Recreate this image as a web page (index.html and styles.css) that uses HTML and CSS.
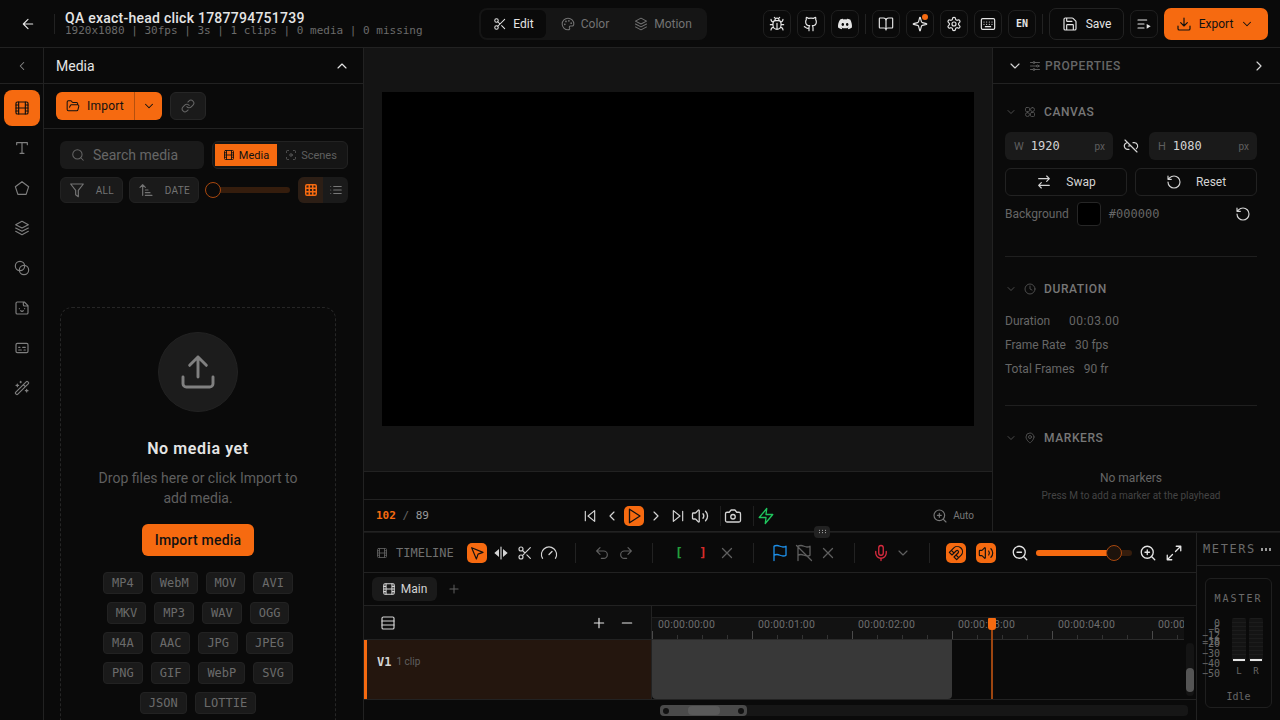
FILE: index.html
```html
<!DOCTYPE html>
<html lang="en">
<head>
    <meta charset="UTF-8">
    <title>QA exact-head click - Editor</title>
    <link rel="stylesheet" href="styles.css">
</head>
<body>

    <!-- Icons -->
    <svg class="sprite" xmlns="http://www.w3.org/2000/svg">
        <symbol id="i-back" viewBox="0 0 24 24"><path d="M19 12H5M12 19l-7-7 7-7"/></symbol>
        <symbol id="i-scissors" viewBox="0 0 24 24"><circle cx="6" cy="6" r="3"/><circle cx="6" cy="18" r="3"/><path d="M8.12 8.12 12 12M20 4 8.12 15.88M14.8 14.8 20 20"/></symbol>
        <symbol id="i-palette" viewBox="0 0 24 24"><path d="M12 22a10 10 0 1 1 10-10c0 2.2-1.6 3.5-3.5 3.5h-2.3a2 2 0 0 0-1.5 3.3c.9 1.1.2 3.2-2.7 3.2z"/><circle cx="13.5" cy="6.5" r=".6"/><circle cx="17.5" cy="10.5" r=".6"/><circle cx="6.5" cy="12.5" r=".6"/><circle cx="8.5" cy="7.5" r=".6"/></symbol>
        <symbol id="i-layers" viewBox="0 0 24 24"><path d="m12 2 9.5 5-9.5 5-9.5-5zM2.5 12l9.5 5 9.5-5M2.5 17l9.5 5 9.5-5"/></symbol>
        <symbol id="i-bug" viewBox="0 0 24 24"><path d="m8 2 1.88 1.88M14.12 3.88 16 2M9 7.13v-1a3 3 0 1 1 6 0v1M12 20c-3.3 0-6-2.7-6-6v-3a4 4 0 0 1 4-4h4a4 4 0 0 1 4 4v3c0 3.3-2.7 6-6 6M12 20v-9M6.53 9C4.6 8.8 3 7.1 3 5M6 13H2M3 21c0-2.1 1.7-3.9 3.8-4M20.97 5c0 2.1-1.6 3.8-3.5 4M22 13h-4M17.2 17c2.1.1 3.8 1.9 3.8 4"/></symbol>
        <symbol id="i-github" viewBox="0 0 24 24"><path d="M15 22v-4a4.8 4.8 0 0 0-1-3.5c3 0 6-2 6-5.5.08-1.25-.27-2.48-1-3.5.28-1.15.28-2.35 0-3.5 0 0-1 0-3 1.5-2.64-.5-5.36-.5-8 0C6 2 5 2 5 2c-.3 1.15-.3 2.35 0 3.5A5.4 5.4 0 0 0 4 9c0 3.5 3 5.5 6 5.5-.39.49-.68 1.05-.85 1.65-.17.6-.22 1.23-.15 1.85v4M9 18c-4.51 2-5-2-7-2"/></symbol>
        <symbol id="i-discord" viewBox="0 0 24 24"><path class="solid" d="M19.3 5.3A17 17 0 0 0 15 4l-.6 1.2a16 16 0 0 0-4.8 0L9 4a17 17 0 0 0-4.3 1.3C2 9.4 1.2 13.4 1.6 17.3A17 17 0 0 0 6.9 20l1.1-1.8-1.7-.8.4-.3a12 12 0 0 0 10.6 0l.4.3-1.7.8 1.1 1.8a17 17 0 0 0 5.3-2.7c.5-4.5-.8-8.5-2.6-12zM8.7 14.9c-1 0-1.9-1-1.9-2.2s.8-2.2 1.9-2.2 1.9 1 1.9 2.2-.8 2.2-1.9 2.2zm6.6 0c-1 0-1.9-1-1.9-2.2s.8-2.2 1.9-2.2 1.9 1 1.9 2.2-.9 2.2-1.9 2.2z"/></symbol>
        <symbol id="i-book" viewBox="0 0 24 24"><path d="M12 7v14M3 18a1 1 0 0 1-1-1V4a1 1 0 0 1 1-1h5a4 4 0 0 1 4 4 4 4 0 0 1 4-4h5a1 1 0 0 1 1 1v13a1 1 0 0 1-1 1h-6a3 3 0 0 0-3 3 3 3 0 0 0-3-3z"/></symbol>
        <symbol id="i-sparkle" viewBox="0 0 24 24"><path d="M9.9 15.5a2 2 0 0 0-1.4-1.4l-6.1-1.6a.5.5 0 0 1 0-1l6.1-1.6a2 2 0 0 0 1.4-1.4l1.6-6.1a.5.5 0 0 1 1 0l1.6 6.1a2 2 0 0 0 1.4 1.4l6.1 1.6a.5.5 0 0 1 0 1l-6.1 1.6a2 2 0 0 0-1.4 1.4l-1.6 6.1a.5.5 0 0 1-1 0z"/></symbol>
        <symbol id="i-gear" viewBox="0 0 24 24"><path d="M12.22 2h-.44a2 2 0 0 0-2 2v.18a2 2 0 0 1-1 1.73l-.43.25a2 2 0 0 1-2 0l-.15-.08a2 2 0 0 0-2.73.73l-.22.38a2 2 0 0 0 .73 2.73l.15.1a2 2 0 0 1 1 1.72v.51a2 2 0 0 1-1 1.74l-.15.09a2 2 0 0 0-.73 2.73l.22.38a2 2 0 0 0 2.73.73l.15-.08a2 2 0 0 1 2 0l.43.25a2 2 0 0 1 1 1.73V20a2 2 0 0 0 2 2h.44a2 2 0 0 0 2-2v-.18a2 2 0 0 1 1-1.73l.43-.25a2 2 0 0 1 2 0l.15.08a2 2 0 0 0 2.73-.73l.22-.39a2 2 0 0 0-.73-2.73l-.15-.08a2 2 0 0 1-1-1.74v-.5a2 2 0 0 1 1-1.74l.15-.09a2 2 0 0 0 .73-2.73l-.22-.38a2 2 0 0 0-2.73-.73l-.15.08a2 2 0 0 1-2 0l-.43-.25a2 2 0 0 1-1-1.73V4a2 2 0 0 0-2-2z"/><circle cx="12" cy="12" r="3"/></symbol>
        <symbol id="i-keyboard" viewBox="0 0 24 24"><rect x="2" y="4" width="20" height="16" rx="2"/><path d="M6 9h.01M10 9h.01M14 9h.01M18 9h.01M6 12.5h.01M10 12.5h.01M14 12.5h.01M18 12.5h.01M8 16h8"/></symbol>
        <symbol id="i-save" viewBox="0 0 24 24"><path d="M15.2 3a2 2 0 0 1 1.4.6l3.8 3.8a2 2 0 0 1 .6 1.4V19a2 2 0 0 1-2 2H5a2 2 0 0 1-2-2V5a2 2 0 0 1 2-2zM17 21v-7a1 1 0 0 0-1-1H8a1 1 0 0 0-1 1v7M7 3v4a1 1 0 0 0 1 1h7"/></symbol>
        <symbol id="i-queue" viewBox="0 0 24 24"><path d="M12 12H3M16 6H3M12 18H3"/><path class="solid" d="m16 12 6 3.500-6 3.500z"/></symbol>
        <symbol id="i-download" viewBox="0 0 24 24"><path d="M21 15v4a2 2 0 0 1-2 2H5a2 2 0 0 1-2-2v-4M7 10l5 5 5-5M12 15V3"/></symbol>
        <symbol id="i-down" viewBox="0 0 24 24"><path d="m6 9 6 6 6-6"/></symbol>
        <symbol id="i-up" viewBox="0 0 24 24"><path d="m18 15-6-6-6 6"/></symbol>
        <symbol id="i-left" viewBox="0 0 24 24"><path d="m15 18-6-6 6-6"/></symbol>
        <symbol id="i-right" viewBox="0 0 24 24"><path d="m9 18 6-6-6-6"/></symbol>
        <symbol id="i-film" viewBox="0 0 24 24"><rect x="3" y="3" width="18" height="18" rx="2"/><path d="M7 3v18M17 3v18M3 7.5h4M3 12h18M3 16.5h4M17 7.5h4M17 16.5h4"/></symbol>
        <symbol id="i-type" viewBox="0 0 24 24"><path d="M4 7V4h16v3M9 20h6M12 4v16"/></symbol>
        <symbol id="i-pentagon" viewBox="0 0 24 24"><path d="M12 2.5 22 10l-3.800 11.500H5.800L2 10z"/></symbol>
        <symbol id="i-blend" viewBox="0 0 24 24"><circle cx="9" cy="9" r="7"/><circle cx="15" cy="15" r="7"/></symbol>
        <symbol id="i-sticker" viewBox="0 0 24 24"><path d="M15.500 3H5a2 2 0 0 0-2 2v14c0 1.100.9 2 2 2h14a2 2 0 0 0 2-2V8.500zM14 3v4a2 2 0 0 0 2 2h4M8 13h.01M16 13h.01M10 16s.8 1 2 1c1.300 0 2-1 2-1"/></symbol>
        <symbol id="i-captions" viewBox="0 0 24 24"><rect x="3" y="5" width="18" height="14" rx="2"/><path d="M7 15h4M15 15h2M7 11h2M13 11h4"/></symbol>
        <symbol id="i-wand" viewBox="0 0 24 24"><path d="m21.640 3.640-1.280-1.280a1.210 1.210 0 0 0-1.720 0L2.360 18.640a1.210 1.210 0 0 0 0 1.720l1.280 1.280a1.200 1.200 0 0 0 1.720 0L21.640 5.360a1.200 1.200 0 0 0 0-1.720M14 7l3 3M5 6v4M19 14v4M10 2v2M7 8H3M21 16h-4M11 3H9"/></symbol>
        <symbol id="i-folder" viewBox="0 0 24 24"><path d="m6 14 1.500-2.900A2 2 0 0 1 9.240 10H20a2 2 0 0 1 1.940 2.500l-1.540 6a2 2 0 0 1-1.950 1.500H4a2 2 0 0 1-2-2V5a2 2 0 0 1 2-2h3.900a2 2 0 0 1 1.690.9l.81 1.200a2 2 0 0 0 1.670.9H18a2 2 0 0 1 2 2v2"/></symbol>
        <symbol id="i-link" viewBox="0 0 24 24"><path d="M10 13a5 5 0 0 0 7.540.54l3-3a5 5 0 0 0-7.070-7.070l-1.720 1.710M14 11a5 5 0 0 0-7.540-.54l-3 3a5 5 0 0 0 7.070 7.070l1.710-1.710"/></symbol>
        <symbol id="i-unlink" viewBox="0 0 24 24"><path d="M9 17H7A5 5 0 0 1 5 7.400M15 7h2a5 5 0 0 1 3 9M8 12h2M3 3l18 18"/></symbol>
        <symbol id="i-search" viewBox="0 0 24 24"><circle cx="11" cy="11" r="8"/><path d="m21 21-4.300-4.300"/></symbol>
        <symbol id="i-scan" viewBox="0 0 24 24"><path d="M3 7V5a2 2 0 0 1 2-2h2M17 3h2a2 2 0 0 1 2 2v2M21 17v2a2 2 0 0 1-2 2h-2M7 21H5a2 2 0 0 1-2-2v-2"/><circle cx="12" cy="12" r="2.500"/></symbol>
        <symbol id="i-funnel" viewBox="0 0 24 24"><path d="M2.500 3h19L14 12.500V22l-4-3v-6.500z"/></symbol>
        <symbol id="i-sort" viewBox="0 0 24 24"><path d="m3 8 4-4 4 4M7 4v16M11 12h4M11 16h7M11 20h10"/></symbol>
        <symbol id="i-grid" viewBox="0 0 24 24"><rect x="3" y="3" width="18" height="18" rx="2"/><path d="M3 9h18M3 15h18M9 3v18M15 3v18"/></symbol>
        <symbol id="i-list" viewBox="0 0 24 24"><path d="M8 6h13M8 12h13M8 18h13M3 6h.01M3 12h.01M3 18h.01"/></symbol>
        <symbol id="i-upload" viewBox="0 0 24 24"><path d="M21 15v4a2 2 0 0 1-2 2H5a2 2 0 0 1-2-2v-4M17 8l-5-5-5 5M12 3v12"/></symbol>
        <symbol id="i-skip-back" viewBox="0 0 24 24"><path d="M19 20 9 12l10-8zM5 19V5"/></symbol>
        <symbol id="i-skip-next" viewBox="0 0 24 24"><path d="m5 4 10 8-10 8zM19 5v14"/></symbol>
        <symbol id="i-play" viewBox="0 0 24 24"><path d="m6 3 14 9-14 9z"/></symbol>
        <symbol id="i-volume" viewBox="0 0 24 24"><path d="M11 4.700a.7.7 0 0 0-1.200-.5L6.400 7.600A1.400 1.400 0 0 1 5.400 8H3a1 1 0 0 0-1 1v6a1 1 0 0 0 1 1h2.400a1.400 1.400 0 0 1 1 .4l3.400 3.400a.7.7 0 0 0 1.200-.5zM16 9a5 5 0 0 1 0 6M19.400 18.400a9 9 0 0 0 0-12.800"/></symbol>
        <symbol id="i-camera" viewBox="0 0 24 24"><path d="M14.500 4h-5L7 7H4a2 2 0 0 0-2 2v9a2 2 0 0 0 2 2h16a2 2 0 0 0 2-2V9a2 2 0 0 0-2-2h-3z"/><circle cx="12" cy="13" r="3"/></symbol>
        <symbol id="i-zap" viewBox="0 0 24 24"><path d="M13 2 3 14h9l-1 8 10-12h-9z"/></symbol>
        <symbol id="i-zoom-in" viewBox="0 0 24 24"><circle cx="11" cy="11" r="8"/><path d="m21 21-4.300-4.300M11 8v6M8 11h6"/></symbol>
        <symbol id="i-zoom-out" viewBox="0 0 24 24"><circle cx="11" cy="11" r="8"/><path d="m21 21-4.300-4.300M8 11h6"/></symbol>
        <symbol id="i-pointer" viewBox="0 0 24 24"><path d="m4 4 7.070 17 2.510-7.390L21 11.070z"/></symbol>
        <symbol id="i-split" viewBox="0 0 24 24"><path d="M12 3v18"/><path class="solid" d="M9 6v12l-7-6zM15 6v12l7-6z"/></symbol>
        <symbol id="i-gauge" viewBox="0 0 24 24"><path d="m12 14 4-4M3.340 19a10 10 0 1 1 17.320 0"/></symbol>
        <symbol id="i-undo" viewBox="0 0 24 24"><path d="M9 14 4 9l5-5M4 9h10.500a5.500 5.500 0 0 1 0 11H11"/></symbol>
        <symbol id="i-redo" viewBox="0 0 24 24"><path d="m15 14 5-5-5-5M20 9H9.500a5.500 5.500 0 0 0 0 11H13"/></symbol>
        <symbol id="i-x" viewBox="0 0 24 24"><path d="M18 6 6 18M6 6l12 12"/></symbol>
        <symbol id="i-flag" viewBox="0 0 24 24"><path d="M4 15s1-1 4-1 5 2 8 2 4-1 4-1V3s-1 1-4 1-5-2-8-2-4 1-4 1zM4 22v-7"/></symbol>
        <symbol id="i-flag-off" viewBox="0 0 24 24"><path d="M4 15s1-1 4-1 5 2 8 2 4-1 4-1V3s-1 1-4 1-5-2-8-2-4 1-4 1zM4 22v-7M2 2l20 20"/></symbol>
        <symbol id="i-mic" viewBox="0 0 24 24"><path d="M12 2a3 3 0 0 0-3 3v7a3 3 0 0 0 6 0V5a3 3 0 0 0-3-3zM19 10v2a7 7 0 0 1-14 0v-2M12 19v3"/></symbol>
        <symbol id="i-magnet" viewBox="0 0 24 24"><path d="m6 15-4-4 6.750-6.770a7.790 7.790 0 0 1 11 11L13 22l-4-4 6.390-6.360a2.140 2.140 0 0 0-3-3L6 15M5 8l4 4M12 15l4 4"/></symbol>
        <symbol id="i-expand" viewBox="0 0 24 24"><path d="M15 3h6v6M21 3l-7 7M3 21l7-7M9 21H3v-6"/></symbol>
        <symbol id="i-rows" viewBox="0 0 24 24"><rect x="3" y="3" width="18" height="18" rx="2"/><path d="M3 9h18M3 15h18"/></symbol>
        <symbol id="i-plus" viewBox="0 0 24 24"><path d="M5 12h14M12 5v14"/></symbol>
        <symbol id="i-minus" viewBox="0 0 24 24"><path d="M5 12h14"/></symbol>
        <symbol id="i-sliders" viewBox="0 0 24 24"><path d="M21 5h-9M8 5H3M21 12h-2M15 12H3M21 19h-9M8 19H3"/><circle cx="10" cy="5" r="2"/><circle cx="17" cy="12" r="2"/><circle cx="10" cy="19" r="2"/></symbol>
        <symbol id="i-shapes" viewBox="0 0 24 24"><rect x="3" y="3" width="8" height="8" rx="2"/><rect x="13" y="3" width="8" height="8" rx="4"/><rect x="3" y="13" width="8" height="8" rx="4"/><rect x="13" y="13" width="8" height="8" rx="2"/></symbol>
        <symbol id="i-swap" viewBox="0 0 24 24"><path d="m16 3 4 4-4 4M20 7H4M8 21l-4-4 4-4M4 17h16"/></symbol>
        <symbol id="i-reset" viewBox="0 0 24 24"><path d="M3 12a9 9 0 1 0 9-9 9.750 9.750 0 0 0-6.740 2.740L3 8M3 3v5h5"/></symbol>
        <symbol id="i-clock" viewBox="0 0 24 24"><circle cx="12" cy="12" r="10"/><path d="M12 6v6l4 2"/></symbol>
        <symbol id="i-pin" viewBox="0 0 24 24"><path d="M20 10c0 6-8 12-8 12s-8-6-8-12a8 8 0 0 1 16 0z"/><circle cx="12" cy="10" r="3"/></symbol>
    </svg>

    <!-- Top bar -->
    <header class="topbar">
        <button class="back"><svg class="ic ic-16"><use href="#i-back"/></svg></button>
        <span class="top-sep"></span>
        <div class="project">
            <div class="project-name">QA exact-head click 1787794751739</div>
            <div class="project-meta">1920x1080 | 30fps | 3s | 1 clips | 0 media | 0 missing</div>
        </div>
        <div class="modes">
            <div class="mode active"><svg class="ic ic-14"><use href="#i-scissors"/></svg>Edit</div>
            <div class="mode"><svg class="ic ic-14"><use href="#i-palette"/></svg>Color</div>
            <div class="mode"><svg class="ic ic-14"><use href="#i-layers"/></svg>Motion</div>
        </div>
        <div class="top-actions">
            <button class="square"><svg class="ic ic-16"><use href="#i-bug"/></svg></button>
            <button class="square"><svg class="ic ic-16"><use href="#i-github"/></svg></button>
            <button class="square"><svg class="ic ic-16"><use href="#i-discord"/></svg></button>
            <span class="top-sep"></span>
            <button class="square"><svg class="ic ic-16"><use href="#i-book"/></svg></button>
            <button class="square has-dot"><svg class="ic ic-16"><use href="#i-sparkle"/></svg></button>
            <button class="square"><svg class="ic ic-16"><use href="#i-gear"/></svg></button>
            <button class="square"><svg class="ic ic-16"><use href="#i-keyboard"/></svg></button>
            <button class="square lang">EN</button>
            <span class="top-sep"></span>
            <button class="save"><svg class="ic ic-16"><use href="#i-save"/></svg>Save</button>
            <button class="square"><svg class="ic ic-16"><use href="#i-queue"/></svg></button>
            <button class="export"><svg class="ic ic-16"><use href="#i-download"/></svg>Export<svg class="ic ic-14"><use href="#i-down"/></svg></button>
        </div>
    </header>

    <div class="workspace">

        <!-- Tool rail -->
        <nav class="rail">
            <button class="rail-collapse"><svg class="ic ic-14"><use href="#i-left"/></svg></button>
            <button class="rail-btn active"><svg class="ic ic-16"><use href="#i-film"/></svg></button>
            <button class="rail-btn"><svg class="ic ic-16"><use href="#i-type"/></svg></button>
            <button class="rail-btn"><svg class="ic ic-16"><use href="#i-pentagon"/></svg></button>
            <button class="rail-btn"><svg class="ic ic-16"><use href="#i-layers"/></svg></button>
            <button class="rail-btn"><svg class="ic ic-16"><use href="#i-blend"/></svg></button>
            <button class="rail-btn"><svg class="ic ic-16"><use href="#i-sticker"/></svg></button>
            <button class="rail-btn"><svg class="ic ic-16"><use href="#i-captions"/></svg></button>
            <button class="rail-btn"><svg class="ic ic-16"><use href="#i-wand"/></svg></button>
        </nav>

        <!-- Media panel -->
        <aside class="media">
            <div class="media-head">
                <span>Media</span>
                <svg class="ic ic-16"><use href="#i-up"/></svg>
            </div>
            <div class="media-import">
                <div class="import-split">
                    <div class="import-main"><svg class="ic ic-14"><use href="#i-folder"/></svg>Import</div>
                    <div class="import-more"><svg class="ic ic-14"><use href="#i-down"/></svg></div>
                </div>
                <button class="link-btn"><svg class="ic ic-14"><use href="#i-link"/></svg></button>
            </div>
            <div class="media-filters">
                <div class="filter-row">
                    <div class="search"><svg class="ic ic-14"><use href="#i-search"/></svg>Search media</div>
                    <div class="source-tabs">
                        <div class="source-tab active"><svg class="ic ic-12"><use href="#i-film"/></svg>Media</div>
                        <div class="source-tab"><svg class="ic ic-12"><use href="#i-scan"/></svg>Scenes</div>
                    </div>
                </div>
                <div class="filter-row filter-row-small">
                    <div class="pill pill-all"><svg class="ic ic-16"><use href="#i-funnel"/></svg>ALL</div>
                    <div class="pill pill-date"><svg class="ic ic-16"><use href="#i-sort"/></svg>DATE</div>
                    <div class="thumb-size"><span class="thumb-knob"></span></div>
                    <div class="view-toggle">
                        <div class="view-btn active"><svg class="ic ic-14"><use href="#i-grid"/></svg></div>
                        <div class="view-btn"><svg class="ic ic-14"><use href="#i-list"/></svg></div>
                    </div>
                </div>
            </div>
            <div class="dropzone">
                <div class="upload-circle"><svg class="ic ic-40"><use href="#i-upload"/></svg></div>
                <h3>No media yet</h3>
                <p>Drop files here or click Import to add media.</p>
                <button class="import-cta">Import media</button>
                <div class="formats">
                    <span>MP4</span><span>WebM</span><span>MOV</span><span>AVI</span>
                    <span>MKV</span><span>MP3</span><span>WAV</span><span>OGG</span>
                    <span>M4A</span><span>AAC</span><span>JPG</span><span>JPEG</span>
                    <span>PNG</span><span>GIF</span><span>WebP</span><span>SVG</span>
                    <span>JSON</span><span>LOTTIE</span>
                </div>
            </div>
        </aside>

        <div class="stage">
            <div class="stage-top">

                <!-- Preview -->
                <section class="preview">
                    <div class="preview-area"><div class="canvas"></div></div>
                    <div class="preview-strip"></div>
                    <div class="transport">
                        <div class="timecode"><b>102</b> / <span>89</span></div>
                        <div class="transport-btns">
                            <button class="tool"><svg class="ic ic-16"><use href="#i-skip-back"/></svg></button>
                            <button class="tool"><svg class="ic ic-16"><use href="#i-left"/></svg></button>
                            <button class="tool on"><svg class="ic ic-18"><use href="#i-play"/></svg></button>
                            <button class="tool"><svg class="ic ic-16"><use href="#i-right"/></svg></button>
                            <button class="tool"><svg class="ic ic-16"><use href="#i-skip-next"/></svg></button>
                            <button class="tool"><svg class="ic ic-18"><use href="#i-volume"/></svg></button>
                            <span class="tp-sep"></span>
                            <button class="tool"><svg class="ic ic-18"><use href="#i-camera"/></svg></button>
                            <span class="tp-sep"></span>
                            <button class="tool zap"><svg class="ic ic-18"><use href="#i-zap"/></svg></button>
                        </div>
                        <div class="zoom-auto"><svg class="ic ic-16"><use href="#i-zoom-in"/></svg>Auto</div>
                    </div>
                </section>

                <!-- Properties -->
                <aside class="props">
                    <div class="props-head">
                        <svg class="ic ic-16 bright"><use href="#i-down"/></svg>
                        <svg class="ic ic-12"><use href="#i-sliders"/></svg>
                        <span>PROPERTIES</span>
                        <svg class="ic ic-16 bright push"><use href="#i-right"/></svg>
                    </div>
                    <section class="prop-section prop-canvas">
                        <div class="prop-title"><svg class="ic ic-12"><use href="#i-down"/></svg><svg class="ic ic-12"><use href="#i-shapes"/></svg><span>CANVAS</span></div>
                        <div class="size-row">
                            <div class="size-field"><i>W</i><b>1920</b><em>px</em></div>
                            <svg class="ic ic-16 bright"><use href="#i-unlink"/></svg>
                            <div class="size-field"><i>H</i><b>1080</b><em>px</em></div>
                        </div>
                        <div class="btn-row">
                            <button class="ghost"><svg class="ic ic-16"><use href="#i-swap"/></svg>Swap</button>
                            <button class="ghost"><svg class="ic ic-16"><use href="#i-reset"/></svg>Reset</button>
                        </div>
                        <div class="bg-row">
                            <span>Background</span>
                            <span class="swatch"></span>
                            <span class="hex">#000000</span>
                            <svg class="ic ic-16 bright push"><use href="#i-reset"/></svg>
                        </div>
                    </section>
                    <section class="prop-section prop-duration">
                        <div class="prop-title"><svg class="ic ic-12"><use href="#i-down"/></svg><svg class="ic ic-12"><use href="#i-clock"/></svg><span>DURATION</span></div>
                        <div class="stat"><span class="stat-wide">Duration</span><span class="stat-time">00:03.00</span></div>
                        <div class="stat"><span>Frame Rate</span><span>30 fps</span></div>
                        <div class="stat"><span>Total Frames</span><span>90 fr</span></div>
                    </section>
                    <section class="prop-section prop-markers">
                        <div class="prop-title"><svg class="ic ic-12"><use href="#i-down"/></svg><svg class="ic ic-12"><use href="#i-pin"/></svg><span>MARKERS</span></div>
                        <div class="no-markers">No markers</div>
                        <div class="no-markers-hint">Press M to add a marker at the playhead</div>
                    </section>
                </aside>
            </div>

            <div class="stage-bottom">

                <!-- Timeline -->
                <section class="timeline">
                    <span class="grip"></span>
                    <div class="tl-tools">
                        <svg class="ic ic-12 tl-film"><use href="#i-film"/></svg>
                        <span class="tl-title">TIMELINE</span>
                        <button class="tool on"><svg class="ic ic-16"><use href="#i-pointer"/></svg></button>
                        <button class="tool bright"><svg class="ic ic-16"><use href="#i-split"/></svg></button>
                        <button class="tool bright"><svg class="ic ic-16"><use href="#i-scissors"/></svg></button>
                        <button class="tool bright"><svg class="ic ic-18"><use href="#i-gauge"/></svg></button>
                        <span class="tl-sep"></span>
                        <button class="tool dim"><svg class="ic ic-16"><use href="#i-undo"/></svg></button>
                        <button class="tool dim"><svg class="ic ic-16"><use href="#i-redo"/></svg></button>
                        <span class="tl-sep"></span>
                        <button class="tool mark-in">[</button>
                        <button class="tool mark-out">]</button>
                        <button class="tool dim"><svg class="ic ic-18"><use href="#i-x"/></svg></button>
                        <span class="tl-sep"></span>
                        <button class="tool flag"><svg class="ic ic-18"><use href="#i-flag"/></svg></button>
                        <button class="tool dim"><svg class="ic ic-18"><use href="#i-flag-off"/></svg></button>
                        <button class="tool dim"><svg class="ic ic-18"><use href="#i-x"/></svg></button>
                        <span class="tl-sep"></span>
                        <button class="tool mic"><svg class="ic ic-18"><use href="#i-mic"/></svg></button>
                        <button class="tool dim tight"><svg class="ic ic-16"><use href="#i-down"/></svg></button>
                        <span class="tl-sep"></span>
                        <button class="tool on"><svg class="ic ic-16"><use href="#i-magnet"/></svg></button>
                        <button class="tool on gap-6"><svg class="ic ic-16"><use href="#i-volume"/></svg></button>
                        <button class="tool brighter gap-10"><svg class="ic ic-18"><use href="#i-zoom-out"/></svg></button>
                        <div class="tl-zoom"><span class="tl-zoom-fill"></span><span class="tl-zoom-knob"></span></div>
                        <button class="tool brighter"><svg class="ic ic-18"><use href="#i-zoom-in"/></svg></button>
                        <button class="tool brighter gap-2"><svg class="ic ic-18"><use href="#i-expand"/></svg></button>
                    </div>
                    <div class="tl-tabs">
                        <div class="tl-tab"><svg class="ic ic-14"><use href="#i-film"/></svg>Main</div>
                        <svg class="ic ic-14 tl-add"><use href="#i-plus"/></svg>
                    </div>
                    <div class="tl-grid">
                        <div class="tl-head">
                            <svg class="ic ic-16 bright"><use href="#i-rows"/></svg>
                            <svg class="ic ic-16 brighter push"><use href="#i-plus"/></svg>
                            <svg class="ic ic-16 brighter"><use href="#i-minus"/></svg>
                        </div>
                        <div class="tl-ruler-wrap">
                            <div class="ruler">
                                <span>00:00:00:00</span><span>00:00:01:00</span><span>00:00:02:00</span>
                                <span>00:00:03:00</span><span>00:00:04:00</span><span>00:00:05:00</span>
                            </div>
                        </div>
                        <div class="track-head">
                            <b>V1</b><span>1 clip</span>
                        </div>
                        <div class="track-lane">
                            <div class="clip"></div>
                        </div>
                        <span class="playhead"></span>
                        <span class="vscroll"><span></span></span>
                    </div>
                    <div class="tl-foot">
                        <div class="hscroll">
                            <div class="hscroll-thumb"><span class="hdot"></span><span class="hgrip"></span><span class="hdot"></span></div>
                        </div>
                    </div>
                </section>

                <!-- Meters -->
                <aside class="meters">
                    <div class="meters-head">METERS<span class="dots"></span></div>
                    <div class="master">
                        <div class="master-name">MASTER</div>
                        <div class="meter-body">
                            <div class="scale">
                                <span class="db-0">0</span><span class="db-6">−6</span><span class="db-12">−12</span><span class="db-18">−18</span><span class="db-20">−20</span><span class="db-30">−30</span><span class="db-40">−40</span><span class="db-50">−50</span>
                            </div>
                            <div class="channel"><div class="bar"><span></span></div><em>L</em></div>
                            <div class="channel"><div class="bar"><span></span></div><em>R</em></div>
                        </div>
                        <div class="master-state">Idle</div>
                    </div>
                </aside>
            </div>
        </div>
    </div>

</body>
</html>
```
FILE: styles.css
```css
* {
    margin: 0;
    padding: 0;
    box-sizing: border-box;
}

html, body {
    height: 720px;
    overflow: hidden;
}

body {
    display: flex;
    flex-direction: column;
    background-color: #0a0a0a;
    color: #e5e5e5;
    font-family: 'Roboto', 'Liberation Sans', sans-serif;
    font-size: 12px;
}

button {
    font-family: inherit;
    color: inherit;
    background: none;
    border: none;
    display: flex;
    align-items: center;
    justify-content: center;
}

.sprite {
    display: none;
}

.ic {
    display: block;
    flex: none;
    fill: none;
    stroke: currentColor;
    stroke-width: 1.75;
    stroke-linecap: round;
    stroke-linejoin: round;
}

.solid {
    fill: currentColor;
    stroke: none;
}

.ic-12 { width: 12px; height: 12px; }
.ic-14 { width: 14px; height: 14px; }
.ic-16 { width: 16px; height: 16px; }
.ic-18 { width: 18px; height: 18px; }
.ic-40 { width: 40px; height: 40px; }

.bright { color: #d4d4d4; }
.brighter { color: #e5e5e5; }
.push { margin-left: auto; }

/* Top bar */
.topbar {
    flex: none;
    height: 48px;
    display: flex;
    align-items: center;
    border-bottom: 1px solid #222;
    padding-right: 12px;
}

.back {
    width: 54px;
    height: 28px;
    padding-left: 1px;
}

.project {
    margin-left: 10px;
    width: 414px;
}

.project-name {
    font-size: 14px;
    line-height: 14px;
    font-weight: 500;
    letter-spacing: 0.25px;
    color: #e5e5e5;
}

.project-meta {
    font-family: 'DejaVu Sans Mono', monospace;
    font-size: 11px;
    line-height: 11px;
    color: #6b6b6b;
}

.modes {
    display: flex;
    width: 228px;
    height: 32px;
    padding: 2px;
    background-color: #151515;
    border-radius: 8px;
}

.mode {
    display: flex;
    align-items: center;
    justify-content: center;
    gap: 6px;
    font-size: 12px;
    color: #737373;
    width: 78px;
    border-radius: 6px;
}

.mode.active {
    width: 65px;
    background-color: #0a0a0a;
    color: #e5e5e5;
}

.top-actions {
    margin-left: auto;
    display: flex;
    align-items: center;
    gap: 6px;
}

.square {
    width: 28px;
    height: 28px;
    position: relative;
    border: 1px solid #1f1f1f;
    border-radius: 7px;
    color: #e5e5e5;
}

.has-dot::after {
    content: '';
    position: absolute;
    top: 3px;
    right: 5px;
    width: 6px;
    height: 6px;
    border-radius: 50%;
    background-color: #f66a10;
}

.lang {
    font-family: 'DejaVu Sans Mono', monospace;
    font-size: 10px;
    font-weight: 700;
}

.top-sep {
    flex: none;
    width: 1px;
    height: 20px;
    background-color: #222;
}

.save {
    width: 75px;
    height: 32px;
    gap: 8px;
    border: 1px solid #222;
    border-radius: 7px;
    font-size: 12px;
    color: #e5e5e5;
}

.export {
    width: 104px;
    height: 32px;
    padding-right: 2px;
    gap: 7px;
    background-color: #f66a10;
    border-radius: 7px;
    color: #111;
    font-size: 12px;
}

/* Workspace */
.workspace {
    flex: 1;
    display: flex;
    min-height: 0;
}

.rail {
    flex: none;
    width: 44px;
    display: flex;
    flex-direction: column;
    align-items: center;
    border-right: 1px solid #222;
}

.rail-collapse {
    width: 100%;
    height: 36px;
    flex: none;
    border-bottom: 1px solid #222;
    color: #8a8a8a;
    margin-bottom: 6px;
}

.rail-btn {
    width: 36px;
    height: 36px;
    flex: none;
    margin-bottom: 4px;
    border-radius: 8px;
    color: #7f7f7f;
}

.rail-btn.active {
    background-color: #f66a10;
    color: #111;
}

/* Media panel */
.media {
    flex: none;
    width: 320px;
    display: flex;
    flex-direction: column;
    border-right: 1px solid #222;
}

.media-head {
    flex: none;
    height: 36px;
    padding: 0 13px 0 12px;
    display: flex;
    align-items: center;
    justify-content: space-between;
    border-bottom: 1px solid #222;
    font-size: 14px;
}

.media-import {
    flex: none;
    height: 45px;
    padding: 8px 12px;
    display: flex;
    gap: 8px;
    border-bottom: 1px solid #222;
}

.import-split {
    display: flex;
    width: 106px;
    height: 28px;
    background-color: #f66a10;
    border-radius: 6px;
    color: #111;
}

.import-main {
    flex: 1;
    display: flex;
    align-items: center;
    gap: 7px;
    padding-left: 10px;
    font-size: 12px;
    letter-spacing: 0.2px;
    border-right: 1px solid #b5500e;
}

.import-more {
    width: 27px;
    display: flex;
    align-items: center;
    justify-content: center;
}

.link-btn {
    width: 36px;
    height: 28px;
    background-color: #1a1a1a;
    border: 1px solid #262626;
    border-radius: 6px;
    color: #666;
}

.media-filters {
    flex: none;
    padding: 12px 15px 0 16px;
    display: flex;
    flex-direction: column;
    gap: 8px;
}

.filter-row {
    display: flex;
    gap: 8px;
    height: 28px;
}

.filter-row-small {
    height: 26px;
    gap: 6px;
}

.search {
    width: 144px;
    display: flex;
    align-items: center;
    gap: 8px;
    padding-left: 11px;
    background-color: #1a1a1a;
    border-radius: 6px;
    font-size: 14px;
    color: #666;
}

.source-tabs {
    width: 136px;
    display: flex;
    padding: 2px;
    background-color: #151515;
    border: 1px solid #222;
    border-radius: 6px;
}

.source-tab {
    flex: 1;
    display: flex;
    align-items: center;
    justify-content: center;
    gap: 4px;
    font-size: 11px;
    color: #5f5f5f;
}

.source-tab.active {
    flex: none;
    width: 62px;
    background-color: #f66a10;
    color: #111;
}

.pill {
    flex: none;
    display: flex;
    align-items: center;
    justify-content: space-between;
    padding: 0 8px;
    background-color: #1a1a1a;
    border: 1px solid #222;
    border-radius: 6px;
    font-size: 10px;
    letter-spacing: 0.3px;
    color: #737373;
}

.pill-all { width: 63px; }
.pill-date { width: 70px; }

.thumb-size {
    flex: none;
    position: relative;
    width: 85px;
    height: 100%;
}

.thumb-size::before {
    content: '';
    position: absolute;
    left: 8px;
    right: 0;
    top: 10px;
    height: 6px;
    border-radius: 3px;
    background-color: #351d0d;
}

.thumb-knob {
    position: absolute;
    left: 0;
    top: 5px;
    width: 16px;
    height: 16px;
    border-radius: 50%;
    background-color: #0a0a0a;
    border: 1px solid #a8480f;
}

.view-toggle {
    flex: none;
    width: 50px;
    margin-left: 2px;
    display: flex;
    background-color: #1a1a1a;
    border-radius: 6px;
    overflow: hidden;
}

.view-btn {
    flex: 1;
    display: flex;
    align-items: center;
    justify-content: center;
    color: #777;
}

.view-btn.active {
    background-color: #2c1e15;
    color: #f66a10;
}

.view-btn.active .ic {
    stroke-width: 2.5;
}

.dropzone {
    margin: 104px 27px 0 16px;
    height: 430px;
    flex: none;
    display: flex;
    flex-direction: column;
    align-items: center;
    padding-top: 24px;
    border: 1px dashed #262626;
    border-radius: 12px;
}

.upload-circle {
    width: 80px;
    height: 80px;
    border-radius: 50%;
    background-color: #1c1c1c;
    border: 1px solid #222;
    display: flex;
    align-items: center;
    justify-content: center;
    color: #808080;
}

.dropzone h3 {
    margin-top: 26px;
    font-size: 16px;
    line-height: 22px;
    font-weight: 600;
    letter-spacing: 0.6px;
    color: #e5e5e5;
}

.dropzone p {
    margin-top: 8px;
    width: 220px;
    font-size: 14px;
    line-height: 20px;
    text-align: center;
    color: #5f5f5f;
}

.import-cta {
    margin-top: 16px;
    width: 112px;
    height: 32px;
    background-color: #f66a10;
    border-radius: 6px;
    font-size: 14px;
    font-weight: 500;
    letter-spacing: 0.2px;
    color: #111;
}

.formats {
    width: 220px;
    margin-top: 16px;
    display: flex;
    flex-wrap: wrap;
    justify-content: center;
    gap: 8px;
}

.formats span {
    height: 22px;
    padding: 0 8px;
    display: flex;
    align-items: center;
    background-color: #1a1a1a;
    border: 1px solid #222;
    border-radius: 4px;
    font-family: 'DejaVu Sans Mono', monospace;
    font-size: 12px;
    color: #6b6b6b;
}

/* Stage */
.stage {
    flex: 1;
    min-width: 0;
    display: flex;
    flex-direction: column;
}

.stage-top {
    flex: none;
    height: 484px;
    display: flex;
    border-bottom: 1px solid #222;
}

.preview {
    width: 629px;
    flex: none;
    display: flex;
    flex-direction: column;
    border-right: 1px solid #222;
}

.preview-area {
    flex: none;
    height: 424px;
    padding: 44px 18px 0;
    background-color: #141414;
    border-bottom: 1px solid #222;
}

.canvas {
    width: 592px;
    height: 334px;
    background-color: #000;
}

.preview-strip {
    flex: none;
    height: 28px;
    border-bottom: 1px solid #222;
}

.transport {
    flex: 1;
    display: grid;
    grid-template-columns: 1fr auto 1fr;
    align-items: center;
    padding: 0 12px;
}

.timecode {
    font-family: 'DejaVu Sans Mono', monospace;
    font-size: 11px;
    color: #666;
}

.timecode b {
    color: #f66a10;
}

.timecode span {
    color: #9a9a9a;
}

.transport-btns {
    display: flex;
    align-items: center;
    gap: 2px;
}

.tool {
    flex: none;
    width: 20px;
    height: 20px;
    border-radius: 5px;
    color: #d4d4d4;
}

.tool.on {
    background-color: #f66a10;
    color: #111;
}

.tool.dim { color: #5f5f5f; }
.tool.zap { color: #1fc45c; }
.tool.bright { color: #d4d4d4; }
.tool.brighter { color: #e5e5e5; }

.tp-sep {
    width: 1px;
    height: 20px;
    margin-left: 8px;
    background-color: #1f1f1f;
}

.zoom-auto {
    justify-self: end;
    margin-right: 6px;
    display: flex;
    align-items: center;
    gap: 5px;
    font-size: 10px;
    color: #777;
}

/* Properties */
.props {
    flex: 1;
    min-width: 0;
    display: flex;
    flex-direction: column;
}

.props-head {
    flex: none;
    height: 36px;
    padding: 0 13px 0 14px;
    display: flex;
    align-items: center;
    gap: 6px;
    border-bottom: 1px solid #222;
    color: #666;
    font-size: 12px;
    font-weight: 500;
    letter-spacing: 0.6px;
}

.props-head span {
    margin-left: -2px;
}

.prop-section {
    margin: 0 23px 0 12px;
    border-bottom: 1px solid #1f1f1f;
}

.prop-canvas { height: 173px; padding-top: 20px; }
.prop-duration { height: 149px; padding-top: 24px; }
.prop-markers { border-bottom: none; padding-top: 24px; }

.prop-title {
    display: flex;
    align-items: center;
    height: 16px;
    gap: 7px;
    color: #555;
}

.prop-title span {
    margin-left: 1px;
    font-size: 12px;
    font-weight: 500;
    letter-spacing: 0.6px;
    color: #777;
}

.size-row {
    margin-top: 12px;
    display: flex;
    align-items: center;
    justify-content: space-between;
}

.size-field {
    width: 108px;
    height: 28px;
    padding: 0 8px 0 9px;
    display: flex;
    align-items: center;
    background-color: #1a1a1a;
    border-radius: 6px;
}

.size-field i {
    margin-right: 7px;
    font-style: normal;
    font-size: 11px;
    color: #5f5f5f;
}

.size-field b {
    flex: 1;
    font-family: 'DejaVu Sans Mono', monospace;
    font-weight: 400;
    font-size: 12px;
    color: #d4d4d4;
}

.size-field em {
    font-style: normal;
    font-size: 10px;
    color: #5f5f5f;
}

.btn-row {
    margin-top: 8px;
    display: flex;
    gap: 8px;
}

.ghost {
    flex: 1;
    height: 28px;
    gap: 14px;
    border: 1px solid #222;
    border-radius: 6px;
    font-size: 12px;
    color: #d4d4d4;
}

.bg-row {
    margin-top: 6px;
    display: flex;
    align-items: center;
    height: 24px;
    font-size: 12px;
    color: #666;
}

.swatch {
    width: 24px;
    height: 24px;
    margin-left: 8px;
    background-color: #000;
    border: 1px solid #262626;
    border-radius: 4px;
}

.hex {
    margin-left: 8px;
    font-family: 'DejaVu Sans Mono', monospace;
    font-size: 12px;
}

.bg-row .ic {
    margin-right: 6px;
}

.stat {
    margin-top: 8px;
    display: flex;
    gap: 9px;
    height: 16px;
    line-height: 16px;
    font-size: 12px;
    color: #666;
}

.prop-title + .stat {
    margin-top: 16px;
}

.stat-wide {
    width: 55px;
}

.stat-time {
    letter-spacing: 0.5px;
}

.no-markers {
    margin-top: 24px;
    text-align: center;
    font-size: 12px;
    line-height: 16px;
    color: #666;
}

.no-markers-hint {
    margin-top: 3px;
    text-align: center;
    font-size: 10px;
    line-height: 14px;
    color: #444;
}

/* Timeline */
.stage-bottom {
    flex: 1;
    min-height: 0;
    display: flex;
    border-top: 1px solid #191919;
}

.timeline {
    position: relative;
    width: 833px;
    flex: none;
    display: flex;
    flex-direction: column;
    border-right: 1px solid #222;
}

.grip {
    position: absolute;
    left: 450px;
    top: -7px;
    width: 16px;
    height: 12px;
    border-radius: 4px;
    background-color: #222;
}

.grip::after {
    content: '';
    position: absolute;
    left: 4px;
    top: 3px;
    width: 8px;
    height: 5px;
    background-image: radial-gradient(#ccc 0.8px, transparent 1px);
    background-size: 3px 2.5px;
}

.tl-tools {
    flex: none;
    height: 40px;
    padding: 0 12px;
    display: flex;
    align-items: center;
    gap: 4px;
    border-bottom: 1px solid #222;
}

.tl-film {
    margin-right: 4px;
    color: #5f5f5f;
}

.tl-title {
    width: 67px;
    font-family: 'DejaVu Sans Mono', monospace;
    font-size: 12px;
    color: #707070;
}

.tl-sep {
    width: 1px;
    height: 20px;
    margin: 0 12px;
    background-color: #222;
}

.tool.mark-in,
.tool.mark-out {
    font-family: 'DejaVu Sans Mono', monospace;
    font-size: 13px;
    font-weight: 700;
}

.tool.mark-in { color: #22a03c; }
.tool.mark-out { color: #d92b2b; }
.tool.flag { color: #1d8fe8; }
.tool.mic { color: #d92b3f; }
.tight { margin-left: -2px; }
.gap-2 { margin-left: 2px; }
.gap-6 { margin-left: 6px; }
.gap-10 { margin-left: 10px; }

.tl-zoom {
    position: relative;
    flex: none;
    width: 96px;
    height: 6px;
    margin: 0 2px;
    border-radius: 3px;
    background-color: #351d0d;
}

.tl-zoom-fill {
    position: absolute;
    left: 0;
    top: 0;
    bottom: 0;
    width: 78px;
    border-radius: 3px;
    background-color: #f66a10;
}

.tl-zoom-knob {
    position: absolute;
    left: 70px;
    top: -5px;
    width: 16px;
    height: 16px;
    border-radius: 50%;
    background-color: #1d130c;
    border: 1px solid #a8480f;
}

.tl-tabs {
    flex: none;
    height: 33px;
    padding: 0 8px;
    display: flex;
    align-items: center;
    gap: 10px;
    border-bottom: 1px solid #222;
}

.tl-tab {
    width: 65px;
    height: 24px;
    display: flex;
    align-items: center;
    justify-content: center;
    gap: 5px;
    background-color: #1a1a1a;
    border-radius: 6px;
    font-size: 12px;
    color: #d4d4d4;
}

.tl-add {
    color: #5f5f5f;
}

.tl-grid {
    position: relative;
    flex: none;
    height: 94px;
    display: grid;
    grid-template-columns: 288px 1fr;
    grid-template-rows: 34px 59px;
    border-bottom: 1px solid #222;
}

.tl-head {
    display: flex;
    align-items: center;
    gap: 12px;
    padding: 0 16px;
    background-color: #0e0e0e;
    border-right: 1px solid #222;
    border-bottom: 1px solid #222;
}

.tl-ruler-wrap {
    padding-top: 11px;
    margin-right: 12px;
    overflow: hidden;
}

.ruler {
    height: 23px;
    width: 600px;
    display: flex;
    background-color: #121212;
    border-top: 1px solid #1f1f1f;
    border-bottom: 1px solid #2a2a2a;
    background-image:
        repeating-linear-gradient(90deg, #4a4a4a 0 1px, transparent 1px 100px),
        repeating-linear-gradient(90deg, #333 0 1px, transparent 1px 25px);
    background-size: 100% 8px, 100% 4px;
    background-repeat: no-repeat;
    background-position: 0 bottom, 0 bottom;
}

.ruler span {
    flex: none;
    width: 100px;
    padding: 1px 0 0 6px;
    font-size: 10.5px;
    line-height: 12px;
    color: #6e6e6e;
    letter-spacing: 0.2px;
}

.track-head {
    display: flex;
    align-items: flex-start;
    gap: 5px;
    padding: 15px 0 0 10px;
    background-color: #24160e;
    border-left: 3px solid #f66a10;
    border-right: 1px solid #222;
    line-height: 14px;
}

.track-head b {
    font-family: 'DejaVu Sans Mono', monospace;
    font-size: 12px;
    color: #d4d4d4;
}

.track-head span {
    font-size: 10px;
    color: #5f5f5f;
}

.track-lane {
    margin-right: 12px;
}

.clip {
    width: 300px;
    height: 100%;
    background-color: #383838;
    border-radius: 0 0 4px 4px;
}

.playhead {
    position: absolute;
    left: 627px;
    top: 12px;
    width: 2px;
    height: 81px;
    background-color: #9c4510;
}

.playhead::before {
    content: '';
    position: absolute;
    left: -3px;
    top: 0;
    width: 8px;
    height: 12px;
    border-radius: 1px 1px 3px 3px;
    background-color: #f66a10;
}

.vscroll {
    position: absolute;
    right: 2px;
    top: 37px;
    width: 8px;
    height: 53px;
    border-radius: 4px;
    background-color: #141414;
}

.vscroll span {
    position: absolute;
    left: 0;
    top: 25px;
    width: 8px;
    height: 24px;
    border-radius: 4px;
    background-color: #555;
}

.tl-foot {
    flex: 1;
    padding: 5px 8px 0 296px;
}

.hscroll {
    height: 11px;
    border-radius: 4px;
    background-color: #161616;
}

.hscroll-thumb {
    width: 87px;
    height: 11px;
    padding: 0 3px;
    display: flex;
    align-items: center;
    justify-content: space-between;
    border-radius: 4px;
    background-color: #4a4a4a;
}

.hdot {
    width: 6px;
    height: 6px;
    border-radius: 50%;
    background-color: #111;
}

.hgrip {
    width: 32px;
    height: 9px;
    border-radius: 4px;
    background-color: #5a5a5a;
}

/* Meters */
.meters {
    flex: 1;
    min-width: 0;
    display: flex;
    flex-direction: column;
}

.meters-head {
    flex: none;
    height: 33px;
    padding-left: 6px;
    display: flex;
    align-items: center;
    gap: 4px;
    border-bottom: 1px solid #222;
    font-family: 'DejaVu Sans Mono', monospace;
    font-size: 12px;
    letter-spacing: 1.6px;
    color: #6b6b6b;
}

.dots {
    width: 12px;
    height: 3px;
    background-image: radial-gradient(circle, #999 1.2px, transparent 1.4px);
    background-size: 4px 3px;
}

.master {
    margin: 12px 8px 0;
    height: 130px;
    padding-top: 14px;
    border: 1px solid #1f1f1f;
    border-radius: 6px;
    display: flex;
    flex-direction: column;
    align-items: center;
}

.master-name {
    font-family: 'DejaVu Sans Mono', monospace;
    font-size: 10px;
    line-height: 12px;
    letter-spacing: 2px;
    color: #6b6b6b;
}

.meter-body {
    position: relative;
    width: 100%;
    margin-top: 13px;
    height: 56px;
    padding-left: 26px;
    display: flex;
    gap: 3px;
}

.scale {
    position: absolute;
    left: 0;
    top: 0;
    width: 14px;
    font-family: 'DejaVu Sans Mono', monospace;
    font-size: 10px;
    line-height: 10px;
    color: #6b6b6b;
}

.scale span {
    position: absolute;
    right: 0;
    white-space: nowrap;
}

.db-0 { top: 1px; }
.db-6 { top: 7px; }
.db-12 { top: 13px; }
.db-18 { top: 19px; }
.db-20 { top: 21px; }
.db-30 { top: 31px; }
.db-40 { top: 41px; }
.db-50 { top: 51px; }

.channel {
    width: 14px;
    display: flex;
    flex-direction: column;
    align-items: center;
}

.channel em {
    margin-top: 5px;
    font-style: normal;
    font-family: 'DejaVu Sans Mono', monospace;
    font-size: 9px;
    line-height: 9px;
    color: #666;
}

.bar {
    position: relative;
    width: 14px;
    height: 44px;
    flex: none;
    border-radius: 2px;
    background-color: #141414;
    background-image: repeating-linear-gradient(#1c1c1c 0 1px, transparent 1px 4px);
}

.bar span {
    position: absolute;
    left: 1px;
    right: 1px;
    bottom: 1px;
    height: 2px;
    background-color: #e5e5e5;
}

.master-state {
    margin-top: 17px;
    font-family: 'DejaVu Sans Mono', monospace;
    font-size: 10px;
    line-height: 12px;
    color: #666;
}
```
